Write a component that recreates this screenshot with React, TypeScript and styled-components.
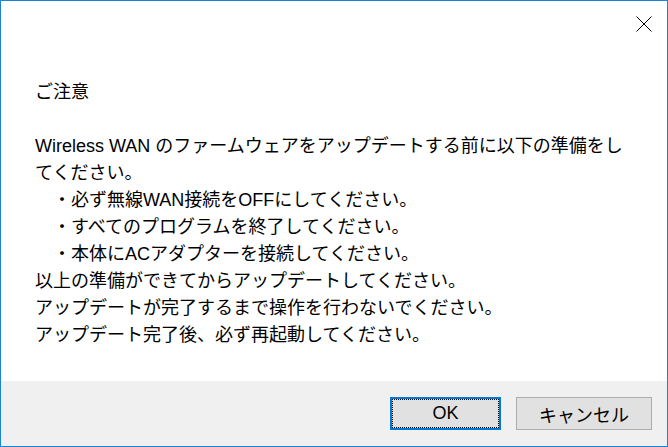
import React from 'react'
import styled, { createGlobalStyle } from 'styled-components'

const GlobalStyle = createGlobalStyle`
  html, body {
    margin: 0;
    padding: 0;
    background: #ffffff;
  }
  * {
    box-sizing: border-box;
  }
`

const FONT = `"Liberation Sans", "Noto Sans CJK JP", sans-serif`

const Window = styled.div`
  width: 668px;
  height: 447px;
  display: flex;
  flex-direction: column;
  border: 1px solid #1883d7;
  background: #ffffff;
  font-family: ${FONT};
  color: #000000;
`

const TitleBar = styled.div`
  height: 45px;
  display: flex;
  justify-content: flex-end;
`

const CloseButton = styled.button`
  width: 46px;
  height: 45px;
  padding: 0;
  border: none;
  background: transparent;
  display: flex;
  align-items: center;
  justify-content: center;
`

const Body = styled.div`
  flex: 1;
  padding: 33px 34px 0 34px;
  font-size: 18px;
  line-height: 27px;
`

const Paragraph = styled.p<{ $gap?: boolean }>`
  margin: 0 0 ${p => (p.$gap ? '27px' : '0')} 0;
`

const List = styled.ul`
  margin: 0;
  padding: 0 0 0 18px;
  list-style: none;
`

const Footer = styled.div`
  height: 65px;
  background: #f0f0f0;
  display: flex;
  align-items: center;
  justify-content: flex-end;
  gap: 15px;
  padding-right: 15px;
`

const Button = styled.button<{ $primary?: boolean; $width: number }>`
  width: ${p => p.$width}px;
  height: 33px;
  padding: 0;
  background: #e1e1e1;
  font-family: ${FONT};
  font-size: 18px;
  color: #000000;
  border: ${p => (p.$primary ? '2px solid #0078d7' : '1px solid #adadad')};
  outline: ${p => (p.$primary ? '1px dotted #000000' : 'none')};
  outline-offset: -3px;
`

function CloseIcon() {
  return (
    <svg width='16' height='16' viewBox='0 0 16 16'>
      <path d='M0.5 0.5 L15.5 15.5 M15.5 0.5 L0.5 15.5' stroke='#000' strokeWidth='1' fill='none' />
    </svg>
  )
}

export default function App() {
  return (
    <>
      <GlobalStyle />
      <Window>
        <TitleBar>
          <CloseButton aria-label='閉じる'>
            <CloseIcon />
          </CloseButton>
        </TitleBar>
        <Body>
          <Paragraph $gap>ご注意</Paragraph>
          <Paragraph>
            Wireless WAN のファームウェアをアップデートする前に以下の準備をしてください。
          </Paragraph>
          <List>
            <li>・必ず無線WAN接続をOFFにしてください。</li>
            <li>・すべてのプログラムを終了してください。</li>
            <li>・本体にACアダプターを接続してください。</li>
          </List>
          <Paragraph>以上の準備ができてからアップデートしてください。</Paragraph>
          <Paragraph>アップデートが完了するまで操作を行わないでください。</Paragraph>
          <Paragraph>アップデート完了後、必ず再起動してください。</Paragraph>
        </Body>
        <Footer>
          <Button $primary $width={111}>OK</Button>
          <Button $width={136}>キャンセル</Button>
        </Footer>
      </Window>
    </>
  )
}
